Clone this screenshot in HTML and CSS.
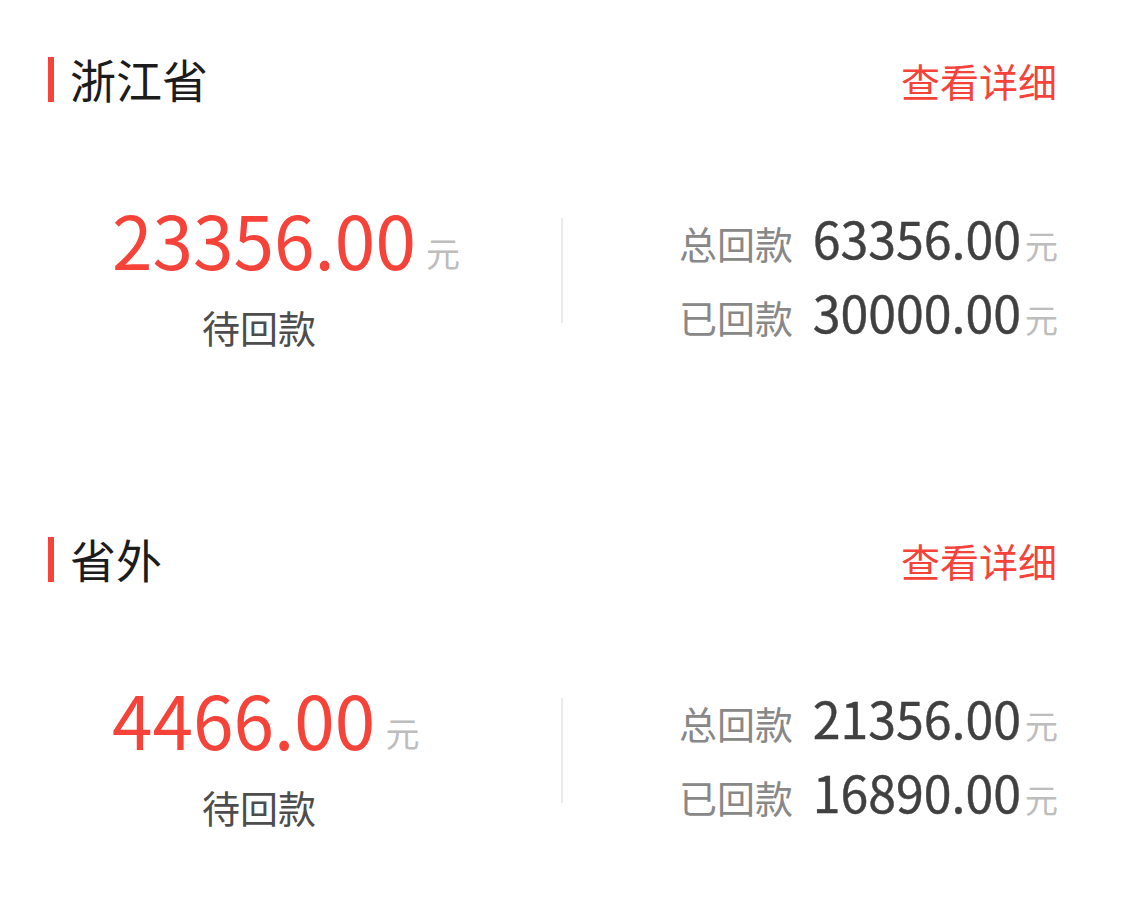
FILE: index.html
```html
<!DOCTYPE html>
<html lang="zh-CN">
<head>
<meta charset="utf-8">
<title>回款</title>
<link rel="stylesheet" href="styles.css">
</head>
<body>
  <section class="region">
    <div class="region-head">
      <h2 class="region-title">浙江省</h2>
      <a class="region-link">查看详细</a>
    </div>
    <div class="region-body">
      <div class="pending">
        <div class="pending-amount"><span class="pending-num">23356.00</span><span class="pending-unit">元</span></div>
        <div class="pending-label">待回款</div>
      </div>
      <div class="divider"></div>
      <div class="totals">
        <div class="total-row"><span class="total-label">总回款</span><span class="total-num">63356.00</span><span class="total-unit">元</span></div>
        <div class="total-row"><span class="total-label">已回款</span><span class="total-num">30000.00</span><span class="total-unit">元</span></div>
      </div>
    </div>
  </section>
  <section class="region">
    <div class="region-head">
      <h2 class="region-title">省外</h2>
      <a class="region-link">查看详细</a>
    </div>
    <div class="region-body">
      <div class="pending">
        <div class="pending-amount"><span class="pending-num">4466.00</span><span class="pending-unit">元</span></div>
        <div class="pending-label">待回款</div>
      </div>
      <div class="divider"></div>
      <div class="totals">
        <div class="total-row"><span class="total-label">总回款</span><span class="total-num">21356.00</span><span class="total-unit">元</span></div>
        <div class="total-row"><span class="total-label">已回款</span><span class="total-num">16890.00</span><span class="total-unit">元</span></div>
      </div>
    </div>
  </section>
</body>
</html>
```
FILE: styles.css
```css
html, body {
  margin: 0;
  padding: 0;
  background: #ffffff;
}
body {
  font-family: "Noto Sans CJK SC", "Noto Sans", sans-serif;
  width: 1125px;
}
.region {
  height: 480px;
  box-sizing: border-box;
  padding-top: 48px;
}
.region-head {
  display: flex;
  align-items: flex-start;
  justify-content: space-between;
  padding: 0 68px 0 48px;
  height: 60px;
}
.region-title {
  margin: 0;
  font-weight: 400;
  font-size: 46px;
  line-height: 60px;
  color: #1c1c1c;
  display: flex;
  align-items: center;
}
.region-title::before {
  content: "";
  display: block;
  width: 6px;
  height: 45px;
  background: #f5433a;
  margin-right: 16px;
  position: relative;
  top: 1px;
}
.region-link {
  font-size: 39px;
  line-height: 64px;
  color: #f5433a;
}
.region-body {
  display: flex;
  align-items: flex-start;
  margin-top: 90px;
}
.pending {
  width: 561px;
  padding-left: 112px;
  box-sizing: border-box;
}
.pending-amount {
  line-height: 80px;
  white-space: nowrap;
}
.pending-num {
  font-size: 73px;
  color: #f5433a;
}
.pending-unit {
  font-size: 34px;
  color: #bdbdbd;
  margin-left: 10px;
  vertical-align: 3px;
}
.pending-label {
  margin-top: 2px;
  margin-left: 90px;
  font-size: 38px;
  line-height: 44px;
  color: #4d4d4d;
}
.divider {
  width: 2px;
  height: 105px;
  margin-top: 20px;
  background: #ebebeb;
}
.totals {
  flex: 1;
  padding: 0 67px 0 116px;
  margin-top: 2px;
}
.total-row {
  display: flex;
  align-items: baseline;
  height: 74px;
  line-height: 74px;
}
.total-label {
  font-size: 38px;
  color: #888888;
}
.total-num {
  flex: 1;
  text-align: right;
  font-size: 50px;
  font-weight: 400;
  color: #404040;
  -webkit-text-stroke: 0.4px #404040;
}
.total-unit {
  font-size: 33px;
  color: #bdbdbd;
  margin-left: 4px;
}
```
